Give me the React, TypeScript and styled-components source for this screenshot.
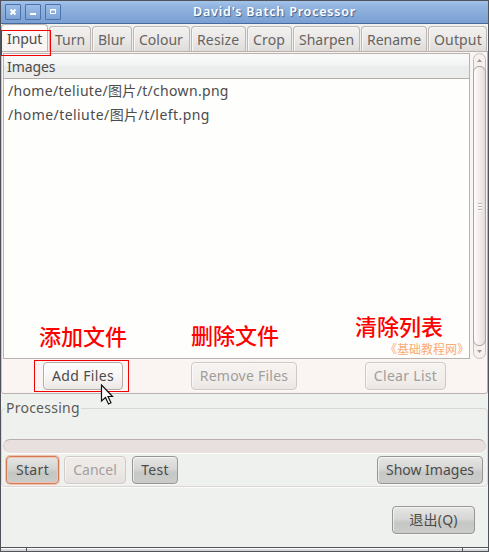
import React from "react";
import styled, { createGlobalStyle, css } from "styled-components";

const GlobalStyle = createGlobalStyle`
  * { box-sizing: border-box; }
  body { margin: 0; overflow: hidden; }
`;

const Window = styled.div`
  position: relative;
  width: 489px;
  height: 552px;
  display: flex;
  flex-direction: column;
  background: #eff1ef;
  border: 1px solid #50545a;
  font-family: "Noto Sans", "Noto Sans CJK SC", sans-serif;
  font-size: 14px;
  color: #4c4c4c;
  white-space: nowrap;
`;

const TitleBar = styled.header`
  display: flex;
  align-items: center;
  flex: none;
  height: 23px;
  padding-left: 4px;
  background: linear-gradient(#a4c4e9, #94b6e1 20%, #7ba1d3 95%);
  border-bottom: 1px solid #466a9e;
`;

const WindowControls = styled.div`
  display: flex;
  gap: 4px;
`;

const ControlButton = styled.button`
  width: 16px;
  height: 16px;
  padding: 0;
  display: flex;
  border: 1px solid #4a72ac;
  border-radius: 1px;
  background: linear-gradient(#9dbde7, #7da3d5);
  svg { display: block; }
`;

const Title = styled.h1`
  margin: 0 0 1px 132px;
  font: 600 12.5px/20px "Noto Sans", sans-serif;
  letter-spacing: 0.8px;
  color: #fff;
  text-shadow: 1px 1px 1px #41618d;
`;

const TabBar = styled.nav`
  display: flex;
  align-items: flex-end;
  gap: 1px;
  flex: none;
  height: 27px;
  background: #eff1ef;
`;

const Tab = styled.div<{ $w: number; $track?: number; $active?: boolean }>`
  width: ${(p) => p.$w}px;
  height: 25px;
  line-height: 26px;
  padding-left: 5px;
  letter-spacing: ${(p) => p.$track ?? 0}px;
  color: #666361;
  background: linear-gradient(#f2f1f0, #e9e7e5 60%, #dedbd9);
  border: 1px solid #bdb7b3;
  border-bottom: 0;
  border-radius: 4px 4px 0 0;
  box-shadow: inset 1px 1px #f8f7f6;
  ${(p) =>
    p.$active &&
    css`
      height: 27px;
      line-height: 28px;
      color: #4c4c4c;
      background: linear-gradient(#fff, #faf4f2 50%);
    `}
`;

const Notebook = styled.section`
  flex: none;
  height: 343px;
  display: flex;
  flex-direction: column;
  background: #faf4f2;
  border: 1px solid #b9b1ad;
  border-left-color: #cbc5c2;
  border-radius: 0 0 3px 3px;
  padding: 1px 1px 0;
`;

const ListArea = styled.div`
  display: flex;
  height: 306px;
  gap: 3px;
`;

const FileList = styled.div`
  width: 467px;
  border: 1px solid #b9b3b0;
  background: #fefefd;
`;

const ListHeader = styled.div`
  height: 25px;
  padding-left: 3px;
  line-height: 26px;
  letter-spacing: -0.1px;
  border-bottom: 1px solid #b5aeab;
  background: linear-gradient(#f9faf9, #f3f5f4 45%, #e9ecea 55%, #eceeed);
`;

const FileRow = styled.div<{ $track: number }>`
  height: 24px;
  padding-left: 4px;
  line-height: 24px;
  letter-spacing: ${(p) => p.$track}px;
`;

const ScrollTrack = styled.div`
  width: 13px;
  height: 306px;
  display: flex;
  flex-direction: column;
  align-items: center;
  justify-content: space-between;
  border: 1px solid #c5bebb;
  border-radius: 7px;
  background: #f6f1ef;
  svg { display: block; }
`;

const ScrollThumb = styled.div`
  width: 13px;
  height: 280px;
  flex: none;
  display: flex;
  flex-direction: column;
  justify-content: center;
  align-items: center;
  gap: 2px;
  border: 1px solid #aaa3a0;
  border-radius: 6px;
  background: linear-gradient(90deg, #fdfbfa, #f2edeb 50%, #e2dddb);
`;

const Grip = styled.i`
  width: 4px;
  height: 1px;
  background: #bbb5b2;
  box-shadow: 0 1px #fff;
`;

const FileActions = styled.div`
  display: flex;
  padding: 3px 0 0 40px;
`;

type Tone = "light" | "lightOff" | "grey" | "greyOff" | "focus";

const tones = {
  light: css`
    color: #4c4c4c;
    border-color: #b3adaa;
    background: linear-gradient(#fefefe, #f6f4f3 60%, #ebe7e5);
  `,
  lightOff: css`
    color: #a09d9b;
    border-color: #cfc9c6;
    background: linear-gradient(#f7f3f1, #f2eeec 60%, #ece7e5);
  `,
  grey: css`
    color: #4c4c4c;
    border-color: #979795;
    background: linear-gradient(#e6e6e5, #d7d8d6 45%, #c6c8c6 60%, #cccdcb);
  `,
  greyOff: css`
    color: #a3a09e;
    border-color: #d1cbc8;
    background: linear-gradient(#f0ecea, #ece8e6 55%, #e4e1df);
  `,
  focus: css`
    color: #4c4c4c;
    border-color: #d47b55;
    background: linear-gradient(#e6e6e5, #d4d5d3 45%, #c4c6c4 60%, #cccdcb);
    && { box-shadow: 0 0 0 1px #f0c4b0, inset 0 0 0 1px #edc5b2; }
  `,
};

const Button = styled.button<{ $w: number; $tone: Tone; $left?: number; $track?: number }>`
  width: ${(p) => p.$w}px;
  height: 28px;
  margin-left: ${(p) => p.$left ?? 0}px;
  padding: 0;
  font: inherit;
  line-height: 26px;
  letter-spacing: ${(p) => p.$track ?? 0}px;
  border: 1px solid;
  border-radius: 4px;
  box-shadow: inset 1px 1px rgba(255, 255, 255, 0.6), 0 1px rgba(255, 255, 255, 0.5);
  ${(p) => tones[p.$tone]}
`;

const Processing = styled.fieldset`
  flex: none;
  height: 88px;
  width: 487px;
  min-width: 0;
  margin: 5px 0 0;
  padding: 0;
  border: 1px solid #dad7d5;
  border-radius: 4px;
  box-shadow: 0 1px #fafafa;
`;

const Legend = styled.legend`
  margin-left: 3px;
  padding: 0 1px;
  height: 18px;
  line-height: 18px;
  letter-spacing: 0.24px;
  color: #5d5a58;
`;

const Progress = styled.div`
  height: 14px;
  width: 483px;
  margin: 22px 0 0 1px;
  border-radius: 7px;
  border: 1px solid #d8d0cd;
  border-top-color: #b8b0ad;
  border-bottom: 0;
  background: #e7e0de;
  box-shadow: 0 1px #fff;
`;

const ProcessActions = styled.div`
  display: flex;
  padding: 3px 0 0 4px;
`;

const Footer = styled.footer`
  display: flex;
  margin-top: 19px;
`;

const ResizeBar = styled.div`
  display: flex;
  margin-top: auto;
  height: 4px;
  flex: none;
  border-top: 1px solid #50545a;
  background: linear-gradient(#fff 1px, #d5d7d8 1px);
  justify-content: space-between;
  padding: 0 25px;
`;

const ResizeMark = styled.i`
  width: 1px;
  height: 3px;
  background: #50545a;
`;

const Outline = styled.div<{ $x: number; $y: number; $w: number; $h: number }>`
  position: absolute;
  left: ${(p) => p.$x}px;
  top: ${(p) => p.$y}px;
  width: ${(p) => p.$w}px;
  height: ${(p) => p.$h}px;
  border: 1px solid #f50000;
`;

const Note = styled.span<{ $x: number; $y: number }>`
  position: absolute;
  left: ${(p) => p.$x}px;
  top: ${(p) => p.$y}px;
  font: 500 22px/26px "Noto Sans CJK SC", sans-serif;
  color: #ff0000;
`;

const Watermark = styled.span`
  position: absolute;
  left: 384px;
  top: 340px;
  font: 12px/16px "Noto Sans CJK SC", sans-serif;
  color: #fbaa74;
`;

const Pointer = styled.svg`
  position: absolute;
  left: 99px;
  top: 383px;
`;

const tabs: [string, number, number][] = [
  ["Input", 47, -0.1],
  ["Turn", 42, 0],
  ["Blur", 40, 0],
  ["Colour", 57, 0],
  ["Resize", 55, 0.15],
  ["Crop", 45, 0.15],
  ["Sharpen", 67, 0],
  ["Rename", 66, 0],
  ["Output", 59, 0.15],
];

export default function App() {
  return (
    <Window>
      <GlobalStyle />
      <TitleBar>
        <WindowControls>
          <ControlButton aria-label="Close">
            <svg width="14" height="14"><path d="M4.5 4.5l5 5m0-5l-5 5" stroke="#fff" strokeWidth="2" /></svg>
          </ControlButton>
          <ControlButton aria-label="Minimize">
            <svg width="14" height="14"><path d="M4 9h6" stroke="#fff" strokeWidth="2" /></svg>
          </ControlButton>
          <ControlButton aria-label="Maximize">
            <svg width="14" height="14"><path d="M4.5 4.5h5v4h-5zM4 5h6" stroke="#fff" fill="none" /></svg>
          </ControlButton>
        </WindowControls>
        <Title>David's Batch Processor</Title>
      </TitleBar>
      <TabBar>
        {tabs.map(([name, w, track], i) => (
          <Tab key={name} $w={w} $track={track} $active={i === 0}>{name}</Tab>
        ))}
      </TabBar>
      <Notebook>
        <ListArea>
          <FileList>
            <ListHeader>Images</ListHeader>
            <FileRow $track={0.32}>/home/teliute/图片/t/chown.png</FileRow>
            <FileRow $track={0.44}>/home/teliute/图片/t/left.png</FileRow>
          </FileList>
          <ScrollTrack>
            <svg width="11" height="12"><path d="M3 8h5L5.500 5z" fill="#9d9896" /></svg>
            <ScrollThumb><Grip /><Grip /><Grip /></ScrollThumb>
            <svg width="11" height="12"><path d="M3 4h5L5.500 7z" fill="#9d9896" /></svg>
          </ScrollTrack>
        </ListArea>
        <FileActions>
          <Button $w={80} $tone="light" $track={0.33}>Add Files</Button>
          <Button $w={106} $tone="lightOff" $left={68} $track={0.25}>Remove Files</Button>
          <Button $w={81} $tone="lightOff" $left={68} $track={0.3}>Clear List</Button>
        </FileActions>
      </Notebook>
      <Processing>
        <Legend>Processing</Legend>
        <Progress />
        <ProcessActions>
          <Button $w={53} $tone="focus" $track={0.35}>Start</Button>
          <Button $w={62} $tone="greyOff" $left={5}>Cancel</Button>
          <Button $w={46} $tone="grey" $left={6} $track={0.3}>Test</Button>
          <Button $w={106} $tone="grey" $left={199}>Show Images</Button>
        </ProcessActions>
      </Processing>
      <Footer>
        <Button $w={83} $tone="grey" $left={391} $track={0.2}>退出(Q)</Button>
      </Footer>
      <ResizeBar><ResizeMark /><ResizeMark /></ResizeBar>
      <Note $x={38} $y={321}>添加文件</Note>
      <Note $x={190} $y={320}>删除文件</Note>
      <Note $x={354} $y={311}>清除列表</Note>
      <Watermark>《基础教程网》</Watermark>
      <Outline $x={0} $y={29} $w={50} $h={26} />
      <Outline $x={33} $y={359} $w={95} $h={32} />
      <Pointer width="15" height="22" viewBox="0 0 15 22">
        <path d="M1.500 1v16l4-3.500 3 6.500 2.500-1.200-3-6.300h4.500z" fill="#fff" stroke="#111" strokeWidth="1.200" />
      </Pointer>
    </Window>
  );
}
